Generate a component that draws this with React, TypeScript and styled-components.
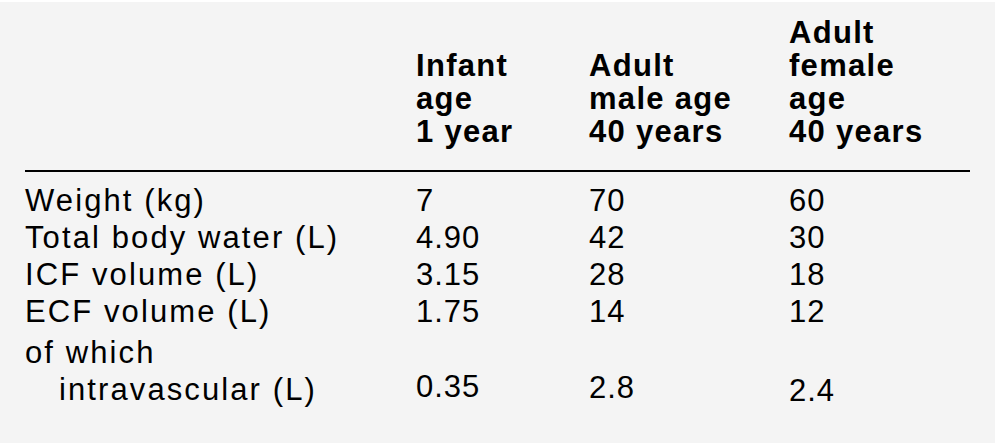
import React, { FC } from 'react';
import styled, { createGlobalStyle } from 'styled-components';

const GlobalStyle = createGlobalStyle`
	html, body {
		margin: 0;
		padding: 0;
		background: #ffffff;
	}
	body {
		font-family: 'Liberation Sans', Arial, sans-serif;
		color: #000;
	}
`;

const Panel = styled.div`
	box-sizing: border-box;
	width: 995px;
	height: 441px;
	margin-top: 2px;
	background-color: #f4f4f4;
	padding: 14px 25px 0 25px;
`;

const Grid = styled.div`
	display: grid;
	grid-template-columns: 391px 173px 200px 181px;
	width: 945px;
`;

const HeadCell = styled.div`
	align-self: end;
	font-weight: bold;
	font-size: 31px;
	line-height: 33px;
	letter-spacing: 1.3px;
	padding-bottom: 22px;
	border-bottom: 2px solid #000;
	margin-bottom: 10px;
`;

const Cell = styled.div<{ $numeric?: boolean; $top?: number; $lift?: number }>`
	align-self: end;
	font-size: 31px;
	line-height: 37px;
	letter-spacing: ${(p) => (p.$numeric ? '1px' : '2.1px')};
	margin-top: ${(p) => p.$top || 0}px;
	margin-bottom: ${(p) => p.$lift || 0}px;
`;

const Indent = styled.span`
	display: block;
	padding-left: 34px;
`;

const headers = [
	'',
	['Infant', 'age', '1 year'],
	['Adult', 'male age', '40 years'],
	['Adult', 'female', 'age', '40 years'],
];

const rows: [string, string, string, string][] = [
	['Weight (kg)', '7', '70', '60'],
	['Total body water (L)', '4.90', '42', '30'],
	['ICF volume (L)', '3.15', '28', '18'],
	['ECF volume (L)', '1.75', '14', '12'],
];

const App: FC = () => (
	<>
		<GlobalStyle />
		<Panel>
			<Grid>
				{headers.map((h, i) => (
					<HeadCell key={i}>
						{Array.isArray(h) ? h.map((line) => <div key={line}>{line}</div>) : '\u00a0'}
					</HeadCell>
				))}
				{rows.map((r) =>
					r.map((v, i) => (
						<Cell key={r[0] + i} $numeric={i > 0}>
							{v}
						</Cell>
					))
				)}
				<Cell $top={4}>
					of which
					<Indent>intravascular (L)</Indent>
				</Cell>
				<Cell $numeric $lift={3}>0.35</Cell>
				<Cell $numeric $lift={2}>2.8</Cell>
				<Cell $numeric $lift={-1}>2.4</Cell>
			</Grid>
		</Panel>
	</>
);

export default App;
